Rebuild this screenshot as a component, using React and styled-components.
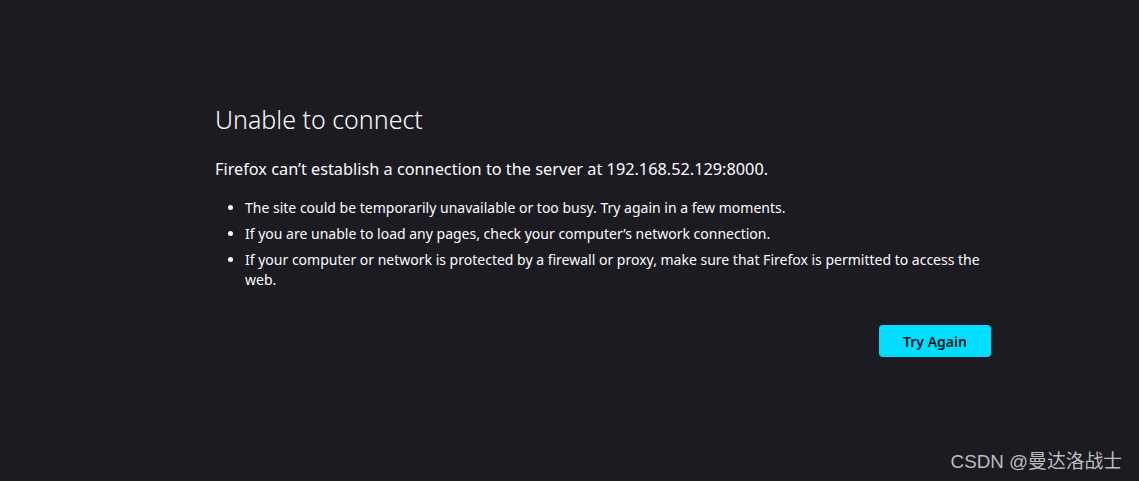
import React from "react";
import styled, { createGlobalStyle } from "styled-components";

const Global = createGlobalStyle`
  html, body { margin: 0; padding: 0; background: #1c1b22; }
  body { font-family: "Noto Sans", "Open Sans", sans-serif; color: #fbfbfe; }
`;

const Page = styled.div`
  position: relative;
  width: 1139px;
  height: 481px;
  box-sizing: border-box;
  padding: 99px 0 0 215px;
  background: #1c1b22;
  overflow: hidden;
`;

const Container = styled.div`
  width: 776px;
  display: flex;
  flex-direction: column;
`;

const Title = styled.h1`
  margin: 0;
  font-size: 25px;
  font-weight: 300;
  line-height: 40px;
  color: #fbfbfe;
`;

const Lead = styled.p`
  margin: 18px 0 0;
  font-size: 16.3px;
  line-height: 24px;
`;

const List = styled.ul`
  margin: 17px 0 0;
  padding-left: 30px;
  display: flex;
  flex-direction: column;
  gap: 6px;
`;

const Item = styled.li`
  font-size: 14px;
  line-height: 20px;
`;

const Actions = styled.div`
  display: flex;
  justify-content: flex-end;
  margin-top: 35px;
`;

const Button = styled.button`
  width: 112px;
  height: 32px;
  border: none;
  border-radius: 4px;
  background: #00ddff;
  color: #15141a;
  font-family: inherit;
  font-weight: 600;
  font-size: 14px;
`;

const Watermark = styled.div`
  position: absolute;
  right: 17px;
  bottom: 8px;
  font-family: "Liberation Sans", "Noto Sans CJK SC", sans-serif;
  font-size: 18.8px;
  color: rgba(220, 220, 220, 0.85);
`;

export default function App() {
  return (
    <>
      <Global />
      <Page>
        <Container>
          <Title>Unable to connect</Title>
          <Lead>Firefox can’t establish a connection to the server at 192.168.52.129:8000.</Lead>
          <List>
            <Item>The site could be temporarily unavailable or too busy. Try again in a few moments.</Item>
            <Item>If you are unable to load any pages, check your computer’s network connection.</Item>
            <Item>If your computer or network is protected by a firewall or proxy, make sure that Firefox is permitted to access the web.</Item>
          </List>
          <Actions>
            <Button>Try Again</Button>
          </Actions>
        </Container>
        <Watermark>CSDN @曼达洛战士</Watermark>
      </Page>
    </>
  );
}
